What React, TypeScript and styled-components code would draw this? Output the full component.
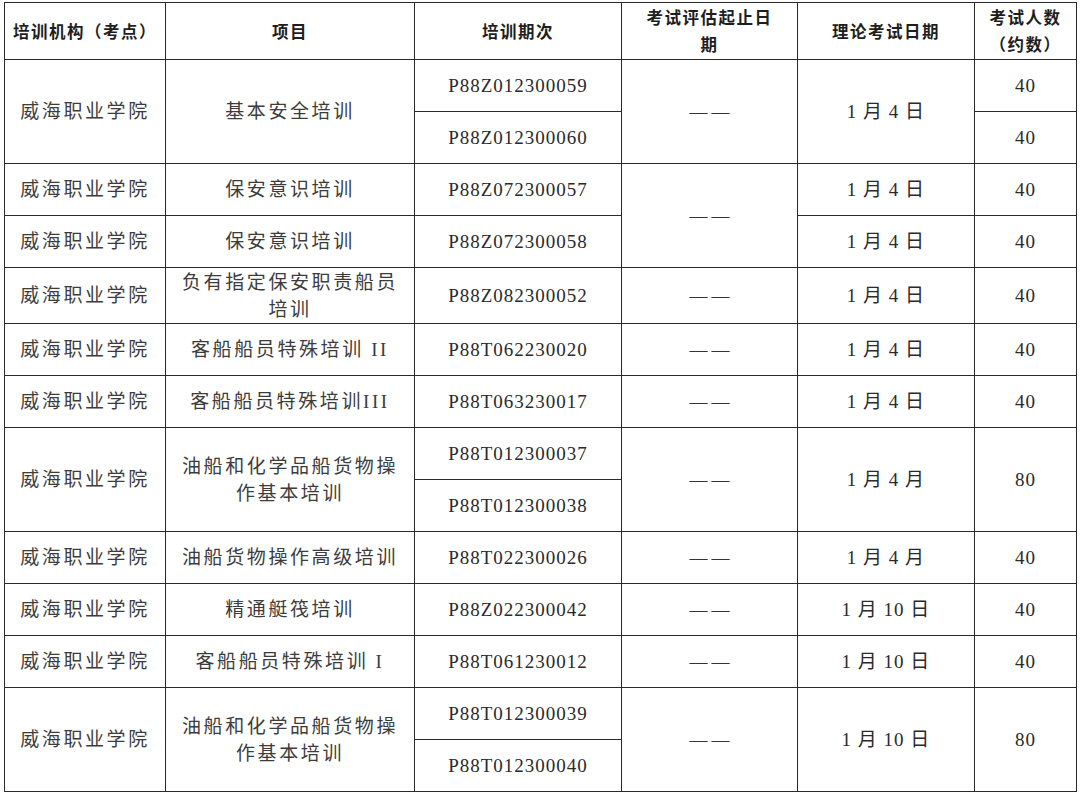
import React from 'react'
import styled, { createGlobalStyle } from 'styled-components'

const GlobalStyle = createGlobalStyle`
  html, body {
    margin: 0;
    padding: 0;
    background: #ffffff;
  }
`

const Page = styled.div`
  padding: 2px 0 0 4px;
`

const Table = styled.table`
  width: 1072px;
  border-collapse: collapse;
  table-layout: fixed;
  font-family: "Liberation Serif", "Noto Sans CJK SC", serif;
  color: #333;
`

const HeadCell = styled.th`
  height: 56px;
  padding: 0 4px;
  border: 1px solid #2a2a2a;
  font-family: "Noto Sans CJK SC", sans-serif;
  font-weight: 700;
  font-size: 16.5px;
  line-height: 27px;
  letter-spacing: 1.5px;
  color: #1e1e1e;
  text-align: center;
  vertical-align: middle;
`

const Row = styled.tr<{ $h?: number }>`
  height: ${(p) => p.$h ?? 52}px;
`

const Cell = styled.td<{ $kind?: 'cn' | 'code' | 'num' }>`
  padding: 0 4px;
  border: 1px solid #2a2a2a;
  text-align: center;
  vertical-align: middle;
  font-size: 19px;
  line-height: 27px;
  white-space: nowrap;
  letter-spacing: ${(p) => (p.$kind === 'code' ? '1px' : p.$kind === 'num' ? '1px' : '2.6px')};
  color: ${(p) => (p.$kind === 'cn' ? '#3c3c3c' : '#2a2a2a')};
`

const Dash = styled.span`
  font-family: "Liberation Serif", serif;
  font-size: 18px;
  letter-spacing: 4px;
  margin-right: -4px;
  color: #333;
`

type Entry = {
  org?: boolean
  item?: string[]
  code: string
  assess?: boolean
  date?: string
  count?: string
  span?: number
  h?: number
}

// span > 1 marks the first line of a merged group; later lines leave the merged fields out
const rows: Entry[] = [
  { org: true, item: ['基本安全培训'], code: 'P88Z012300059', assess: true, date: '1 月 4 日', count: '40', span: 2 },
  { code: 'P88Z012300060', count: '40' },
  { org: true, item: ['保安意识培训'], code: 'P88Z072300057', assess: true, date: '1 月 4 日', count: '40' },
  { org: true, item: ['保安意识培训'], code: 'P88Z072300058', date: '1 月 4 日', count: '40' },
  { org: true, item: ['负有指定保安职责船员', '培训'], code: 'P88Z082300052', assess: true, date: '1 月 4 日', count: '40', h: 56 },
  { org: true, item: ['客船船员特殊培训 II'], code: 'P88T062230020', assess: true, date: '1 月 4 日', count: '40' },
  { org: true, item: ['客船船员特殊培训III'], code: 'P88T063230017', assess: true, date: '1 月 4 日', count: '40' },
  { org: true, item: ['油船和化学品船货物操', '作基本培训'], code: 'P88T012300037', assess: true, date: '1 月 4 月', count: '80', span: 2 },
  { code: 'P88T012300038' },
  { org: true, item: ['油船货物操作高级培训'], code: 'P88T022300026', assess: true, date: '1 月 4 月', count: '40' },
  { org: true, item: ['精通艇筏培训'], code: 'P88Z022300042', assess: true, date: '1 月 10 日', count: '40' },
  { org: true, item: ['客船船员特殊培训 I'], code: 'P88T061230012', assess: true, date: '1 月 10 日', count: '40' },
  { org: true, item: ['油船和化学品船货物操', '作基本培训'], code: 'P88T012300039', assess: true, date: '1 月 10 日', count: '80', span: 2 },
  { code: 'P88T012300040' },
]

// assessment column of rows 3-4 is merged although the other fields are not
const assessSpan = (i: number) => (i === 2 ? 2 : rows[i].span ?? 1)

const Lines = ({ lines }: { lines: string[] }) => (
  <>
    {lines.map((l, i) => (
      <React.Fragment key={i}>
        {i > 0 && <br />}
        {l}
      </React.Fragment>
    ))}
  </>
)

export default function App() {
  return (
    <>
      <GlobalStyle />
      <Page>
        <Table>
          <colgroup>
            <col style={{ width: 161 }} />
            <col style={{ width: 249 }} />
            <col style={{ width: 207 }} />
            <col style={{ width: 176 }} />
            <col style={{ width: 177 }} />
            <col style={{ width: 102 }} />
          </colgroup>
          <thead>
            <tr>
              <HeadCell>培训机构（考点）</HeadCell>
              <HeadCell>项目</HeadCell>
              <HeadCell>培训期次</HeadCell>
              <HeadCell>
                考试评估起止日
                <br />期
              </HeadCell>
              <HeadCell>理论考试日期</HeadCell>
              <HeadCell>
                考试人数
                <br />（约数）
              </HeadCell>
            </tr>
          </thead>
          <tbody>
            {rows.map((r, i) => {
              const span = r.span ?? 1
              const countSpan = r.count && i + 1 < rows.length && !rows[i + 1].org && !rows[i + 1].count ? 2 : 1
              return (
                <Row key={r.code} $h={r.h}>
                  {r.org && (
                    <Cell $kind="cn" rowSpan={span}>
                      威海职业学院
                    </Cell>
                  )}
                  {r.item && (
                    <Cell $kind="cn" rowSpan={span}>
                      <Lines lines={r.item} />
                    </Cell>
                  )}
                  <Cell $kind="code">{r.code}</Cell>
                  {r.assess && (
                    <Cell rowSpan={assessSpan(i)}>
                      <Dash>——</Dash>
                    </Cell>
                  )}
                  {r.date && (
                    <Cell $kind="num" rowSpan={span}>
                      {r.date}
                    </Cell>
                  )}
                  {r.count && (
                    <Cell $kind="num" rowSpan={countSpan}>
                      {r.count}
                    </Cell>
                  )}
                </Row>
              )
            })}
          </tbody>
        </Table>
      </Page>
    </>
  )
}
